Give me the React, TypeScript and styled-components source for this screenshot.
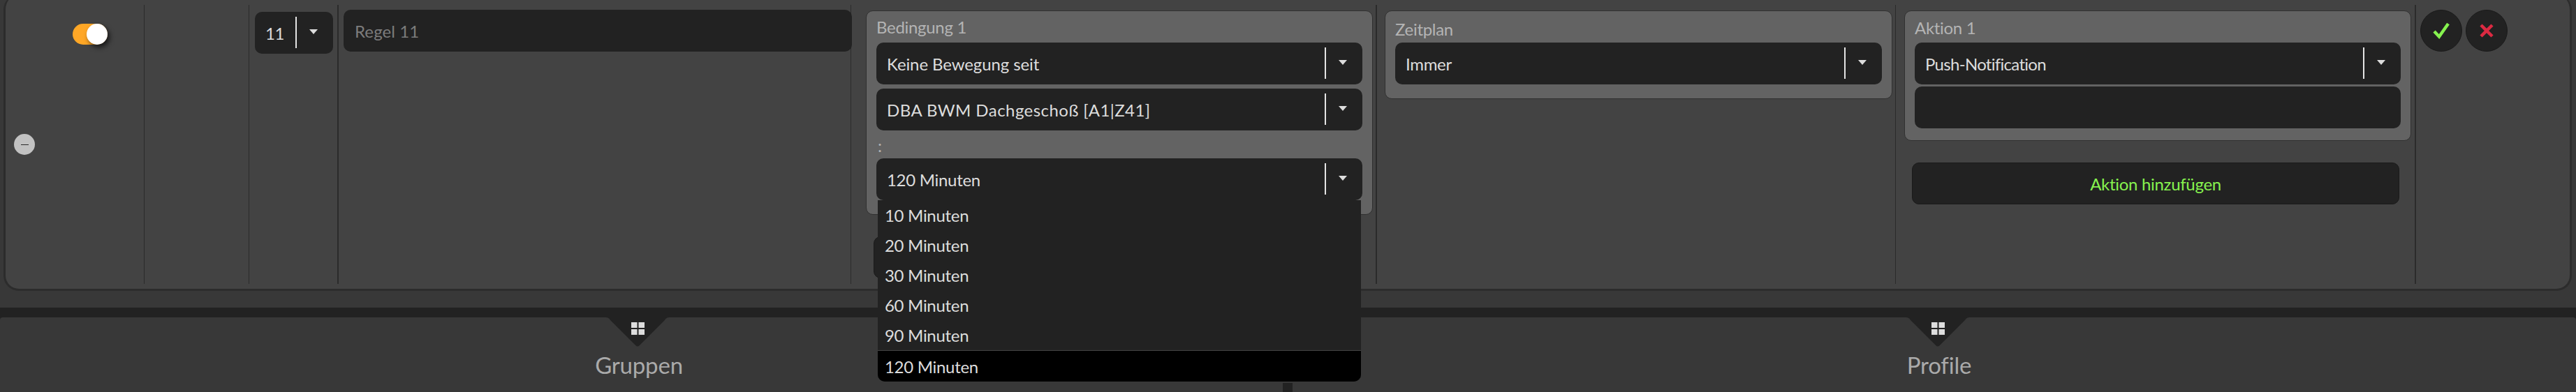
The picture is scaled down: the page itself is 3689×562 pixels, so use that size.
import React from "react";
import styled, { createGlobalStyle } from "styled-components";

const Global = createGlobalStyle`
  html, body { margin: 0; padding: 0; background: #383838; overflow: hidden; }
  * { box-sizing: border-box; }
  #root { font-family: "Lato", "Liberation Sans", sans-serif; }
`;

const Page = styled.div`
  position: relative;
  width: 3689px;
  height: 562px;
  overflow: hidden;
  background: #383838;
  display: flex;
  flex-direction: column;
`;

const Card = styled.section`
  flex: none;
  width: 3678px;
  height: 425px;
  margin: -8px 0 0 5px;
  padding: 15px 0 7px;
  background: #434343;
  border-left: 3px solid #2c2c2c;
  border-right: 3px solid #2c2c2c;
  border-bottom: 3px solid #2c2c2c;
  border-radius: 22px;
  display: grid;
  grid-template-columns: 199px 150px 128px 734px 753px 743px 745px 1fr;
`;

const Cell = styled.div<{ $thick?: boolean; $last?: boolean }>`
  position: relative;
  height: 400px;
  border-right: ${(p) => (p.$last ? "none" : `${p.$thick ? 2 : 1}px solid #2b2b2b`)};
`;

const ToggleCell = styled(Cell)`
  padding: 27px 0 0 12px;
  display: flex;
  flex-direction: column;
  align-items: flex-start;
`;

const Toggle = styled.div`
  position: relative;
  width: 50px;
  height: 30px;
  margin-left: 84px;
  border-radius: 15px;
  background: #ffa726;
  flex: none;
`;

const Knob = styled.span`
  position: absolute;
  top: 0;
  right: 0;
  width: 30px;
  height: 30px;
  border-radius: 50%;
  background: #fff;
  box-shadow: 3px 4px 7px rgba(0, 0, 0, 0.65);
`;

const MinusButton = styled.button`
  width: 30px;
  height: 30px;
  margin-top: 128px;
  padding: 0;
  border: none;
  border-radius: 50%;
  background: #c2c2c2;
  display: flex;
  align-items: center;
  justify-content: center;
  &::after {
    content: "";
    width: 11px;
    height: 1px;
    background: #2a2a2a;
  }
`;

const NumberCell = styled(Cell)`
  padding: 10px 0 0 8px;
`;

const RuleCell = styled(Cell)`
  padding: 7px 0 0 7px;
`;

const ColumnCell = styled(Cell)<{ $left: number }>`
  padding: 8px 0 0 ${(p) => p.$left}px;
`;

const ActionsCell = styled(Cell)`
  padding: 7px 0 0 6px;
  display: flex;
  gap: 5px;
  align-items: flex-start;
`;

const Field = styled.div<{ $width?: number }>`
  position: relative;
  flex: none;
  width: ${(p) => (p.$width ? `${p.$width}px` : "100%")};
  height: 60px;
  background: #222;
  border-radius: 10px;
  color: #ddd;
  font-size: 24px;
  display: flex;
  align-items: center;
  padding-left: 15px;
`;

const FieldText = styled.span<{ $spacing?: number }>`
  flex: 1;
  white-space: nowrap;
  letter-spacing: ${(p) => p.$spacing ?? -0.3}px;
`;

const Divider = styled.span`
  flex: none;
  width: 2px;
  height: 45px;
  margin-top: -1px;
  background: #e4e4e4;
`;

const ArrowBox = styled.span`
  flex: none;
  width: 52px;
  padding-right: 4px;
  margin-top: -3px;
  display: flex;
  justify-content: center;
  &::after {
    content: "";
    width: 0;
    height: 0;
    border-left: 6px solid transparent;
    border-right: 6px solid transparent;
    border-top: 7px solid #ddd;
  }
`;

const RuleInput = styled(Field)`
  width: 728px;
  color: #7c7c7c;
  padding-left: 16px;
`;

const Panel = styled.div<{ $width: number; $gap: number; $bottom: number }>`
  width: ${(p) => p.$width}px;
  padding: 0 14px ${(p) => p.$bottom}px;
  background: #636363;
  border: 1px solid #303030;
  border-radius: 10px;
  display: flex;
  flex-direction: column;
  gap: ${(p) => p.$gap}px;
`;

const Heading = styled.div<{ $height: number }>`
  height: ${(p) => p.$height}px;
  flex: none;
  padding-top: 5px;
  display: flex;
  align-items: center;
  color: #b4b4b4;
  font-size: 24px;
  letter-spacing: -0.3px;
`;

const Colon = styled.div`
  height: 28px;
  padding: 2px 0 0 2px;
  display: flex;
  align-items: center;
  color: #b4b4b4;
  font-size: 24px;
`;

const AddButton = styled.button`
  display: block;
  width: 698px;
  height: 60px;
  margin: 31px 0 0 11px;
  padding: 0;
  background: #222;
  border: 1px solid #1a1a1a;
  border-radius: 10px;
  color: #86f24f;
  font: inherit;
  font-size: 24px;
  letter-spacing: -0.3px;
`;

const Menu = styled.ul`
  position: absolute;
  z-index: 10;
  top: 100%;
  left: 2px;
  right: 2px;
  margin: 0;
  padding: 0;
  list-style: none;
  background: #222;
  border-radius: 0 0 10px 10px;
  overflow: hidden;
`;

const MenuItem = styled.li<{ $selected?: boolean }>`
  height: ${(p) => (p.$selected ? 45 : 43)}px;
  padding-left: 10px;
  display: flex;
  align-items: center;
  color: #ddd;
  font-size: 24px;
  letter-spacing: -0.3px;
  background: ${(p) => (p.$selected ? "#000" : "transparent")};
  border-top: ${(p) => (p.$selected ? "1px solid #444" : "none")};
`;

const RoundButton = styled.button`
  flex: none;
  width: 60px;
  height: 60px;
  padding: 0;
  background: #222;
  border: 1px solid #1a1a1a;
  border-radius: 50%;
  display: flex;
  align-items: center;
  justify-content: center;
`;

const Gap = styled.div`
  flex: none;
  height: 24px;
`;

const Band = styled.div`
  flex: 1;
  background: #222;
  padding-top: 14px;
  display: flex;
  position: relative;
`;

const Nav = styled.nav`
  flex: 1;
  background: #383838;
  border-radius: 4px 4px 0 0;
  display: flex;
  align-items: flex-start;
  padding-left: 813px;
  gap: 1662px;
`;

const Tab = styled.div`
  flex: none;
  width: 200px;
  display: flex;
  flex-direction: column;
  align-items: center;
`;

const TabLabel = styled.span`
  margin-top: 4px;
  margin-left: 4px;
  color: #aaa;
  font-size: 33px;
  line-height: 42px;
  letter-spacing: -0.2px;
`;

const Handle = styled.div`
  position: absolute;
  left: 1837px;
  bottom: 0;
  width: 14px;
  height: 13px;
  background: #222;
`;

const Select = ({
  children,
  width,
  spacing,
}: {
  children?: React.ReactNode;
  width?: number;
  spacing?: number;
}) => (
  <Field $width={width}>
    <FieldText $spacing={spacing}>{children}</FieldText>
    <Divider />
    <ArrowBox />
  </Field>
);

const TabMarker = () => (
  <svg width="94" height="43" viewBox="0 0 94 43" style={{ display: "block" }}>
    <path d="M0 0 C5 0 6 1 8 4 L44 40 Q47 43 50 40 L86 4 C88 1 89 0 94 0 Z" fill="#222" />
    <g fill="#ddd">
      <rect x="38" y="7" width="8.5" height="8" />
      <rect x="48.5" y="7" width="8.5" height="8" />
      <rect x="38" y="17" width="8.5" height="8" />
      <rect x="48.5" y="17" width="8.5" height="8" />
    </g>
  </svg>
);

const minutes = ["10 Minuten", "20 Minuten", "30 Minuten", "60 Minuten", "90 Minuten"];

export default function App() {
  return (
    <>
      <Global />
      <Page>
        <Card>
          <ToggleCell>
            <Toggle>
              <Knob />
            </Toggle>
            <MinusButton aria-label="Entfernen" />
          </ToggleCell>
          <Cell />
          <NumberCell $thick>
            <Select width={112}>11</Select>
          </NumberCell>
          <RuleCell>
            <RuleInput>
              <FieldText $spacing={0.1}>Regel 11</FieldText>
            </RuleInput>
          </RuleCell>
          <ColumnCell $left={21} $thick>
            <Panel $width={726} $gap={6} $bottom={20}>
              <Heading $height={39}>Bedingung 1</Heading>
              <Select spacing={-0.1}>Keine Bewegung seit</Select>
              <Select spacing={0.45}>DBA BWM Dachgeschoß [A1|Z41]</Select>
              <Colon>:</Colon>
              <Field>
                <FieldText>120 Minuten</FieldText>
                <Divider />
                <ArrowBox />
                <Menu>
                  {minutes.map((m) => (
                    <MenuItem key={m}>{m}</MenuItem>
                  ))}
                  <MenuItem $selected>120 Minuten</MenuItem>
                </Menu>
              </Field>
            </Panel>
            <AddButton>Bedingung hinzufügen</AddButton>
          </ColumnCell>
          <ColumnCell $left={11}>
            <Panel $width={727} $gap={0} $bottom={20}>
              <Heading $height={45}>Zeitplan</Heading>
              <Select>Immer</Select>
            </Panel>
          </ColumnCell>
          <ColumnCell $left={12} $thick>
            <Panel $width={726} $gap={3} $bottom={17}>
              <Heading $height={42}>Aktion 1</Heading>
              <Select spacing={-0.7}>Push-Notification</Select>
              <Field />
            </Panel>
            <AddButton>Aktion hinzufügen</AddButton>
          </ColumnCell>
          <ActionsCell $last>
            <RoundButton aria-label="Speichern">
              <svg width="26" height="26" viewBox="0 0 26 26">
                <path d="M3 14 L10 21.5 L23 3" fill="none" stroke="#86f24f" strokeWidth="4.5" />
              </svg>
            </RoundButton>
            <RoundButton aria-label="Abbrechen">
              <svg width="22" height="22" viewBox="0 0 22 22">
                <path d="M3 3 L19 19 M19 3 L3 19" fill="none" stroke="#dc2a42" strokeWidth="4.5" />
              </svg>
            </RoundButton>
          </ActionsCell>
        </Card>
        <Gap />
        <Band>
          <Nav>
            <Tab>
              <TabMarker />
              <TabLabel>Gruppen</TabLabel>
            </Tab>
            <Tab>
              <TabMarker />
              <TabLabel>Profile</TabLabel>
            </Tab>
          </Nav>
          <Handle />
        </Band>
      </Page>
    </>
  );
}
